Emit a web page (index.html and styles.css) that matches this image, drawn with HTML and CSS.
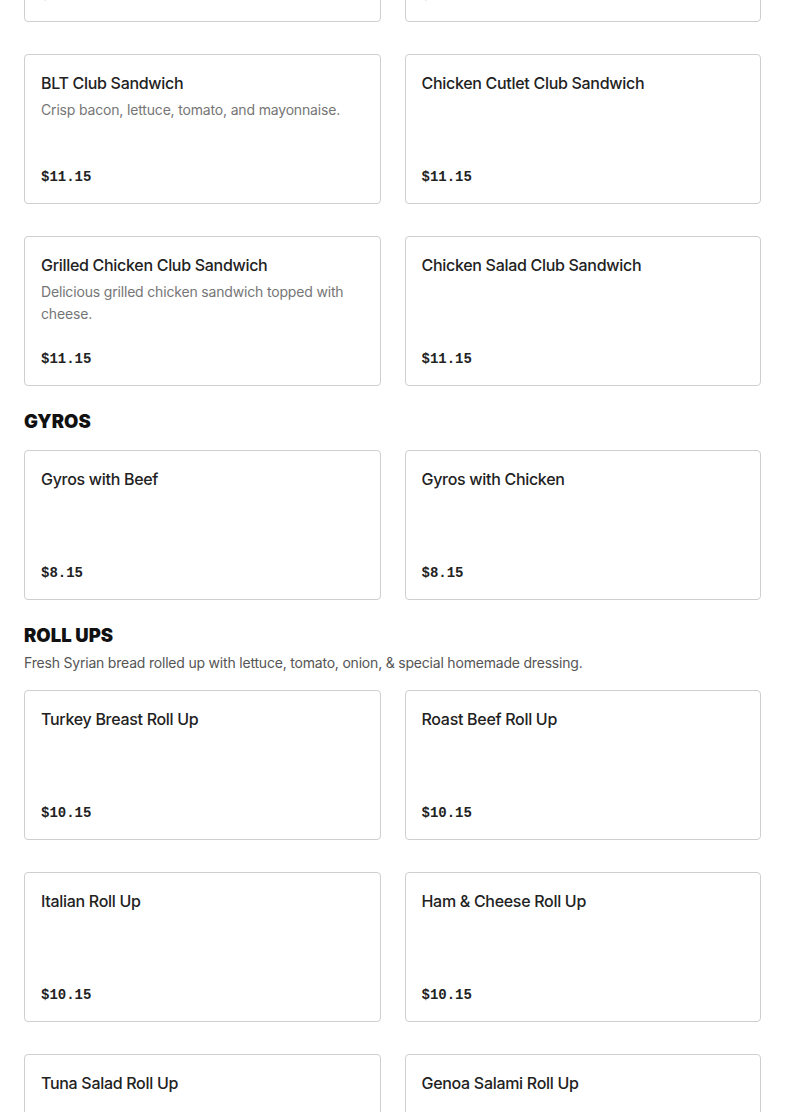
FILE: index.html
```html
<!DOCTYPE html>
<html>
<head>
<meta charset="utf-8">
<link rel="stylesheet" href="styles.css">
</head>
<body>
<main class="menu">
  <section class="section">
    <div class="grid">
      <div class="card"><h3 class="title">Club Sandwich</h3><div class="price">$11.15</div></div>
      <div class="card"><h3 class="title">Turkey Club Sandwich</h3><div class="price">$11.15</div></div>
      <div class="card"><h3 class="title">BLT Club Sandwich</h3><p class="desc">Crisp bacon, lettuce, tomato, and mayonnaise.</p><div class="price">$11.15</div></div>
      <div class="card"><h3 class="title">Chicken Cutlet Club Sandwich</h3><div class="price">$11.15</div></div>
      <div class="card"><h3 class="title">Grilled Chicken Club Sandwich</h3><p class="desc">Delicious grilled chicken sandwich topped with cheese.</p><div class="price">$11.15</div></div>
      <div class="card"><h3 class="title">Chicken Salad Club Sandwich</h3><div class="price">$11.15</div></div>
    </div>
  </section>
  <section class="section">
    <h2 class="heading">GYROS</h2>
    <div class="grid">
      <div class="card"><h3 class="title">Gyros with Beef</h3><div class="price">$8.15</div></div>
      <div class="card"><h3 class="title">Gyros with Chicken</h3><div class="price">$8.15</div></div>
    </div>
  </section>
  <section class="section">
    <h2 class="heading">ROLL UPS</h2>
    <p class="section-desc">Fresh Syrian bread rolled up with lettuce, tomato, onion, &amp; special homemade dressing.</p>
    <div class="grid">
      <div class="card"><h3 class="title">Turkey Breast Roll Up</h3><div class="price">$10.15</div></div>
      <div class="card"><h3 class="title">Roast Beef Roll Up</h3><div class="price">$10.15</div></div>
      <div class="card"><h3 class="title">Italian Roll Up</h3><div class="price">$10.15</div></div>
      <div class="card"><h3 class="title">Ham &amp; Cheese Roll Up</h3><div class="price">$10.15</div></div>
      <div class="card"><h3 class="title">Tuna Salad Roll Up</h3><div class="price">$10.15</div></div>
      <div class="card"><h3 class="title">Genoa Salami Roll Up</h3><div class="price">$10.15</div></div>
    </div>
  </section>
</main>
</body>
</html>
```

FILE: styles.css
```css
* { box-sizing: border-box; }
html, body { margin: 0; padding: 0; background: #fff; }
body {
  font-family: Inter, "Liberation Sans", Arial, sans-serif;
  color: #222;
  overflow: hidden;
}
.menu {
  padding: 0 24px;
  margin-top: -128px;
}
.section { margin-bottom: 23px; }
.grid {
  display: grid;
  grid-template-columns: 1fr 1fr;
  column-gap: 24px;
  row-gap: 32px;
}
.card {
  border: 1px solid #cfcfcf;
  border-radius: 4px;
  min-height: 150px;
  padding: 16px 16px 16px;
  display: flex;
  flex-direction: column;
}
.title {
  margin: 0;
  font-size: 16px;
  line-height: 24px;
  font-weight: 500;
  letter-spacing: -0.3px;
  color: #222;
}
.desc {
  margin: 4px 0 0;
  font-size: 14px;
  line-height: 22px;
  letter-spacing: -0.17px;
  color: #767676;
}
.price {
  margin-top: auto;
  font-family: "Liberation Mono", "Courier New", monospace;
  font-size: 14px;
  line-height: 20px;
  font-weight: 700;
  color: #222;
}
.heading {
  margin: 0 0 17px;
  font-size: 18.5px;
  line-height: 24px;
  font-weight: 900;
  color: #111;
}
.section-desc {
  margin: -12px 0 16px;
  font-size: 14px;
  line-height: 22px;
  letter-spacing: -0.2px;
  color: #555;
}
```
